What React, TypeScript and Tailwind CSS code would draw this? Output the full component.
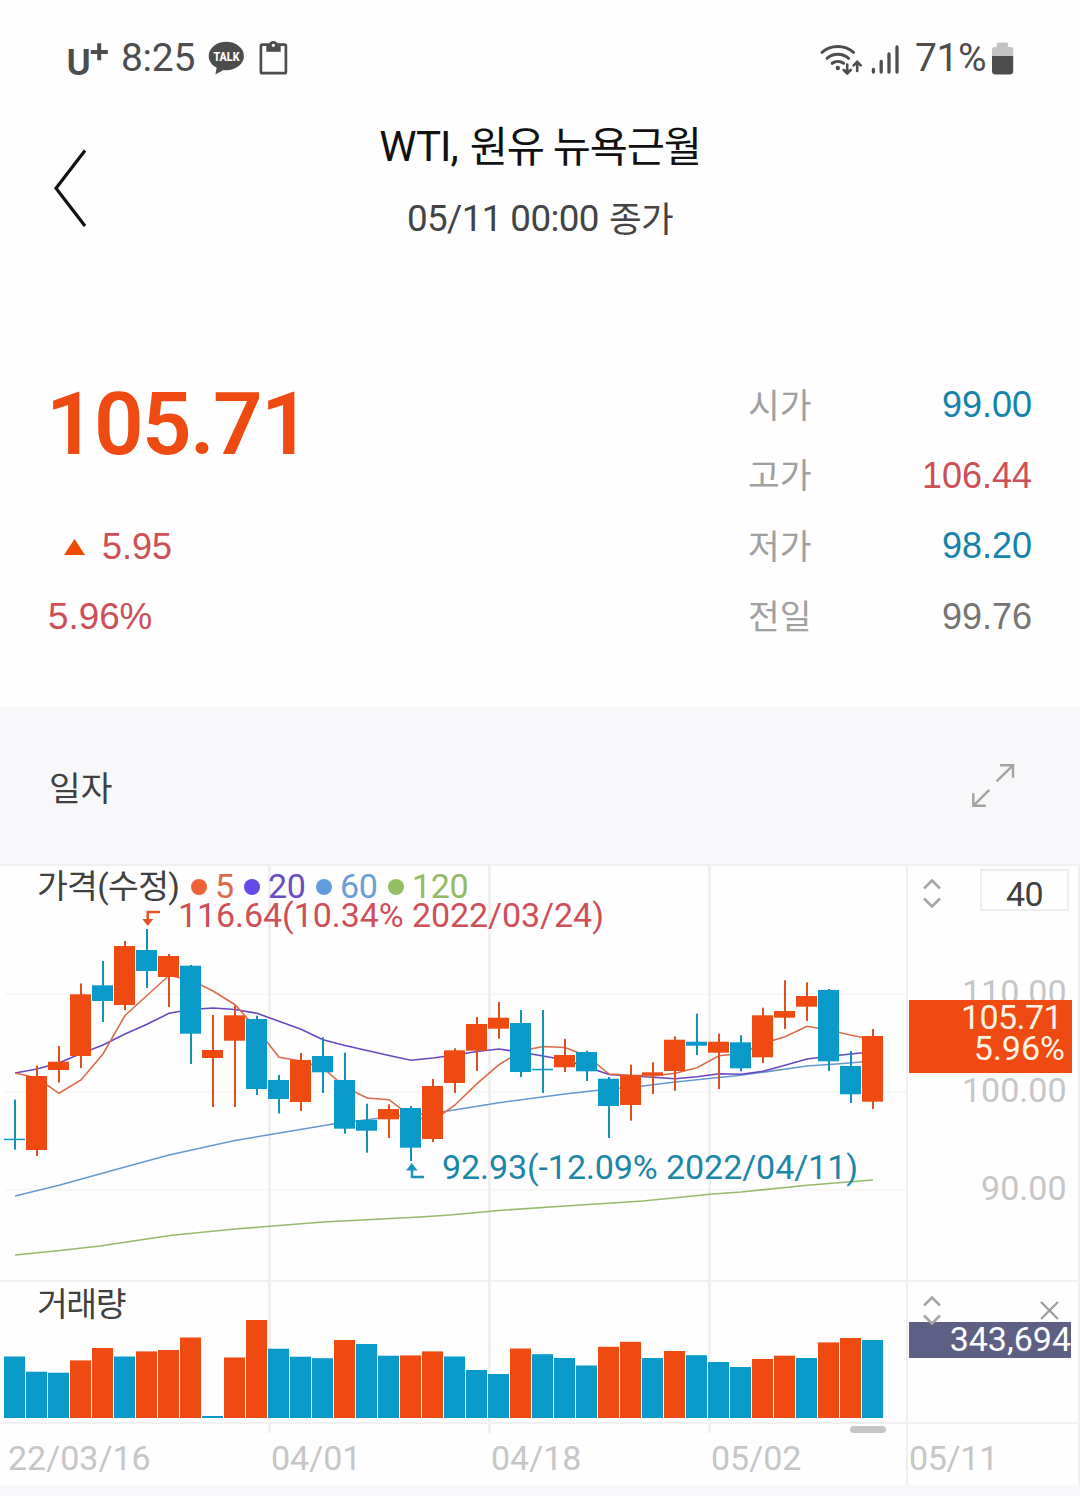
type Candle = [up: number, high: number, top: number, bottom: number, low: number];

const UP = "#f04a13";
const DOWN = "#0a9aca";
const GRID = "#f0f0f1";

// [up, high, body top, body bottom, low]
const candles: Candle[] = [
  [0, 1099.5, 1138.7, 1140.2, 1149.7],
  [1, 1065.7, 1076, 1150, 1156],
  [1, 1046, 1061.7, 1070, 1082.5],
  [1, 983.5, 994.3, 1056, 1068],
  [0, 961, 985.3, 1001, 1022],
  [1, 941, 946, 1005, 1010],
  [0, 929, 950, 971, 988],
  [1, 954, 956, 977, 1007],
  [0, 965, 965.7, 1033.7, 1064],
  [1, 1015, 1050, 1058, 1107],
  [1, 1005.7, 1015.3, 1040.7, 1107],
  [0, 1015.7, 1019, 1089, 1095],
  [0, 1075, 1080, 1099, 1113.5],
  [1, 1053, 1060, 1102, 1111],
  [0, 1037.3, 1056, 1072.3, 1093],
  [0, 1052.7, 1080, 1128.7, 1133.7],
  [0, 1103.7, 1120, 1130.7, 1152.7],
  [1, 1104.3, 1109, 1119.3, 1138],
  [0, 1106, 1108, 1147.7, 1161],
  [1, 1079, 1086, 1139, 1142],
  [1, 1048.3, 1050.3, 1083, 1093],
  [1, 1017, 1024, 1050.7, 1071],
  [1, 1002, 1017.7, 1028.7, 1038.7],
  [0, 1010, 1023, 1072, 1077],
  [0, 1010, 1068.8, 1070.3, 1093],
  [1, 1039, 1055, 1067.3, 1072],
  [0, 1050.7, 1052, 1071.3, 1081],
  [0, 1077, 1078.7, 1106, 1138],
  [1, 1064.7, 1075.3, 1105, 1120.7],
  [1, 1062.3, 1072.3, 1075.3, 1094],
  [1, 1036.3, 1039.7, 1071, 1090.7],
  [0, 1013.7, 1041.7, 1045.7, 1055],
  [1, 1033.7, 1041.7, 1052.7, 1089],
  [0, 1035.3, 1042.3, 1068.3, 1071.3],
  [1, 1007.7, 1015.3, 1057.3, 1063],
  [1, 980.3, 1011, 1017.7, 1029],
  [1, 982.3, 996, 1006.7, 1021],
  [0, 989, 990, 1061.3, 1071],
  [0, 1051, 1066, 1094.3, 1103],
  [1, 1029, 1036, 1101.7, 1109],
];

// [up, bar height]
const volumes: [number, number][] = [
  [0, 61.5], [0, 46.3], [0, 45.3], [1, 57.6], [1, 70], [0, 61.5], [1, 66.6], [1, 68],
  [1, 80.5], [0, 2], [1, 60.5], [1, 98], [0, 69.3], [0, 61.3], [0, 59.8], [1, 78],
  [0, 74], [0, 62.3], [1, 62.6], [1, 66.6], [0, 61.5], [0, 48], [0, 44], [1, 69.5],
  [0, 63.8], [0, 60], [0, 52.5], [1, 71.2], [1, 76.2], [0, 60], [1, 67], [0, 62.8],
  [0, 56], [0, 51], [1, 59], [1, 62.3], [0, 60], [1, 75.6], [1, 80], [0, 78],
];

const ma5 = [
  1073, 1078, 1093.3, 1080, 1054, 1015.5, 995.5, 975.5, 980, 991, 1004.7, 1029, 1057.3, 1061,
  1068, 1087, 1098, 1099.7, 1116.5, 1121, 1105, 1083.7, 1064.7, 1051, 1046.5, 1047.5, 1056, 1074,
  1075.3, 1076, 1073.3, 1067.7, 1055.7, 1053.5, 1043.5, 1036.7, 1026.3, 1030, 1035.3, 1039.5,
];

const ma20 = [
  1073, 1069, 1063, 1053.5, 1045, 1034, 1024.3, 1013.3, 1009.5, 1008, 1009.5, 1013.3, 1021.3,
  1029.3, 1039.7, 1045.5, 1050.5, 1055.5, 1060.3, 1058, 1055, 1051.5, 1049, 1052.3, 1056, 1060,
  1067, 1074.5, 1076, 1077.3, 1078.7, 1076.7, 1073.7, 1074.3, 1071.3, 1065.3, 1059, 1056.3, 1054,
  1051.7,
];

const ma60 =
  "15,1196 59,1185.3 125,1167 169,1155 235,1140.5 260,1136.3 333,1124 389,1117 443,1111.7 499,1102.7 565,1094 598,1090.3 641,1086.3 675,1082 741,1075.3 807,1066 840,1063.7 873,1061";
const ma120 =
  "15,1255 60,1250.5 100,1246 170,1235.5 235,1229 323,1222 420,1217 450,1215 499,1210.5 565,1206 643,1201 710,1194.3 741,1192 807,1185.3 873,1180";

const linePoints = (values: number[]) => values.map((y, i) => `${15 + 22 * i},${y}`).join(" ");

const quotes = [
  { label: "시가", value: "99.00", color: "text-[#1583ab]" },
  { label: "고가", value: "106.44", color: "text-[#cd4f57]" },
  { label: "저가", value: "98.20", color: "text-[#1583ab]" },
  { label: "전일", value: "99.76", color: "text-[#757575]" },
];

const legend = [
  { label: "5", dot: "bg-[#ee6336]", text: "text-[#dc6a48]", box: "w-[53px]" },
  { label: "20", dot: "bg-[#6549e8]", text: "text-[#6a4cc4]", box: "w-[72px]" },
  { label: "60", dot: "bg-[#619cdf]", text: "text-[#689ed6]", box: "w-[72px]" },
  { label: "120", dot: "bg-[#95bf63]", text: "text-[#93ba62]", box: "w-[90px]" },
];

const StatusBar = () => (
  <div className="flex h-[116px] items-center justify-between pr-[66px] pl-[62px] text-[39px] leading-none text-[#4d4d4d]">
    <div className="flex items-center">
      <svg width="50" height="56" viewBox="62 30 50 56" fill="#4d4d4d">
        <text x="66.500" y="74.800" fontSize="37" fontWeight="600">U</text>
        <path d="M97.2 43.2h4v6.800h6.600v3.900h-6.600v6.300h-4v-6.300h-6.400V50h6.400z" />
      </svg>
      <span className="ml-[9px] w-[87px] tracking-[-0.3px]">8:25</span>
      <svg width="38" height="36" viewBox="208 40 38 36">
        <ellipse cx="226.3" cy="56" rx="17.6" ry="14.2" fill="#4d4d4d" />
        <path d="M217 66l-1.6 8.600 9.600-5.400z" fill="#4d4d4d" />
        <text x="226.5" y="61.300" fill="#fff" fontSize="13.200" fontWeight="800" textAnchor="middle" textLength="26" lengthAdjust="spacingAndGlyphs">TALK</text>
      </svg>
      <svg className="ml-3" width="32" height="38" viewBox="258 38 32 38" fill="none">
        <rect x="260.900" y="43.700" width="25" height="28.500" rx="1.500" stroke="#4d4d4d" strokeWidth="2.700" />
        <path d="M266.300 43.500h14.400v7.300h-14.400z" fill="#4d4d4d" />
        <circle cx="273.400" cy="44.500" r="4.500" fill="#4d4d4d" />
        <circle cx="273.400" cy="44.300" r="1.600" fill="#fff" />
      </svg>
    </div>
    <div className="flex items-center">
      <svg width="94" height="38" viewBox="818 38 94 38" fill="none" stroke="#4d4d4d" strokeLinecap="round">
        <g strokeWidth="3">
          <path d="M822 51.300a24.500 24.500 0 0 1 31.600 0" />
          <path d="M827 57.300a16.500 16.500 0 0 1 21.600 0" />
          <path d="M832.2 62.300a9.500 9.500 0 0 1 11.400 0" />
        </g>
        <circle cx="837.8" cy="67" r="2.200" fill="#4d4d4d" stroke="none" />
        <path d="M847.2 63.500v8.500M843.700 69l3.500 3.500 3.500-3.500M857.200 70v-8.500M853.700 64.300l3.500-3.500 3.500 3.500" strokeWidth="2.600" />
        <path d="M873.400 68.500v2.500M881.200 60.500v10.500M889 53v18M897 46v25" strokeWidth="3.300" />
      </svg>
      <span className="ml-[3px] w-[77px] tracking-[-0.4px]">71%</span>
      <svg width="22" height="34" viewBox="992 41 22 34">
        <path d="M998 42.500h8.500q1.500 0 1.500 1.500v3h2q3.200 0 3.200 3.200V56H992v-5.800q0-3.200 3.200-3.200h1.500v-3q0-1.500 1.300-1.500z" fill="#c3c3c3" />
        <path d="M992 56h21.200v15q0 3.500-3.500 3.500h-14.200q-3.500 0-3.500-3.500z" fill="#4d4d4d" />
      </svg>
    </div>
  </div>
);

const TitleBar = () => (
  <header className="grid h-[253px] grid-cols-[130px_1fr_130px]">
    <svg className="mt-[30px] ml-[50px]" width="40" height="84" viewBox="50 146 40 84" fill="none">
      <path d="M85 150.500L56 188.300 85 226" stroke="#111" strokeWidth="3.200" />
    </svg>
    <div className="flex flex-col items-center gap-3 pt-px whitespace-nowrap">
      <h1 className="flex h-[60px] gap-3 text-[42px] leading-[60px] tracking-[-1px] text-[#111]">
        <span>WTI,</span>
        <span className="pt-px text-[41.500px] tracking-[-1.200px]">원유 뉴욕근월</span>
      </h1>
      <p className="flex h-[60px] gap-[10px] text-[36.800px] leading-[60px] tracking-[-0.600px] text-[#444]">
        <span>05/11 00:00</span>
        <span className="pt-px text-[35.500px]">종가</span>
      </p>
    </div>
  </header>
);

const Quote = () => (
  <section className="flex h-[338px] justify-between px-12">
    <div className="font-['Liberation_Sans',sans-serif] text-[36px] text-[#cd4f57]">
      <p className="-ml-[2px] font-[Roboto,sans-serif] text-[87px] leading-[110px] font-semibold tracking-[-1.700px] text-[#f04a13]">
        105.71
      </p>
      <div className="mt-8 flex h-[71px] items-center pl-4">
        <svg width="21" height="16" viewBox="0 0 21 16">
          <path d="M10.500 0L21 16H0z" fill="#f04a00" />
        </svg>
        <span className="ml-[17px]">5.95</span>
      </div>
      <p className="text-[36.800px] leading-[69px]">5.96%</p>
    </div>
    <dl className="w-[284px] pt-px text-[36px]">
      {quotes.map((quote) => (
        <div key={quote.label} className="flex h-[70.500px] items-center justify-between">
          <dt className="pt-[3px] text-[34.500px] text-[#a0a0a0]">{quote.label}</dt>
          <dd className={`font-['Liberation_Sans',sans-serif] ${quote.color}`}>{quote.value}</dd>
        </div>
      ))}
    </dl>
  </section>
);

const Chevrons = () => (
  <svg width="18" height="29" viewBox="0 0 18 29" fill="none" stroke="#a6a6a6" strokeWidth="2.600">
    <path d="M1 9.500L9 1.500l8 8M1 19.500l8 8 8-8" />
  </svg>
);

const PriceChart = () => (
  <svg className="block" width="906" height="414" viewBox="0 866 906 414">
    <g fill="#f7f7f8">
      <rect x="5" y="993" width="901" height="2.300" />
      <rect x="5" y="1090.500" width="901" height="2.300" />
      <rect x="5" y="1188.500" width="901" height="2.300" />
    </g>
    <g fill={GRID}>
      <rect x="268" y="866" width="3" height="414" />
      <rect x="488" y="866" width="3" height="414" />
      <rect x="708" y="866" width="3" height="414" />
    </g>
    <g fill="none" strokeWidth="1.600">
      <polyline points={ma120} stroke="#97b96c" />
      <polyline points={ma60} stroke="#6499d0" />
      <polyline points={linePoints(ma20)} stroke="#6847c0" />
      <polyline points={linePoints(ma5)} stroke="#dd6b49" />
    </g>
    {candles.map(([up, high, top, bottom, low], i) => (
      <g key={i}>
        <rect x={14 + 22 * i} y={high} width="2" height={low - high} fill={up ? "#dc4f20" : "#1590bb"} />
        <rect x={4 + 22 * i} y={top} width="21" height={bottom - top} fill={up ? UP : DOWN} />
      </g>
    ))}
    <path d="M160 912h-12.300v9" fill="none" stroke="#e55322" strokeWidth="2.500" />
    <path d="M142.300 919h11l-5.500 7z" fill="#e55322" />
    <path d="M424 1177h-12v-10" fill="none" stroke="#1b93bb" strokeWidth="2.500" />
    <path d="M406 1170.500h11.500l-5.700-7.500z" fill="#1b93bb" />
    <g fontSize="34">
      <text x="178" y="927" fill="#cd4f57" textLength="426">116.64(10.34% 2022/03/24)</text>
      <text x="442" y="1179" fill="#1b86a8" textLength="416">92.93(-12.09% 2022/04/11)</text>
    </g>
  </svg>
);

const PricePanel = () => (
  <div className="flex h-[416px] border-b-2 border-[#f0f0f1]">
    <div className="relative w-[906px]">
      <PriceChart />
      <div className="absolute top-0 left-[37px] flex h-10 items-center text-[34px] whitespace-nowrap">
        <span className="w-[154px] pt-[3px] text-[33.500px] tracking-[-0.700px] text-[#404040]">가격(수정)</span>
        {legend.map((item) => (
          <span key={item.label} className={`flex items-center gap-2 tracking-[-0.300px] ${item.box} ${item.text}`}>
            <i className={`mt-[2px] size-4 shrink-0 rounded-full ${item.dot}`} />
            {item.label}
          </span>
        ))}
      </div>
    </div>
    <div className="relative w-[174px] border-x-2 border-[#f0f0f1]">
      <div className="flex justify-between pt-[3px] pr-[9px] pl-[15px]">
        <div className="pt-[10px]">
          <Chevrons />
        </div>
        <div className="flex h-[42px] w-[89px] items-center justify-center border-[2.500px] border-[#eeeeef] pt-2 text-[34px] tracking-[-0.500px] text-[#404040]">
          40
        </div>
      </div>
      <svg className="absolute top-0 left-0" width="170" height="414" viewBox="908 866 170 414" fill="#c6c6c6" fontSize="34" textAnchor="end">
        <text x="1066.500" y="1004">110.00</text>
        <text x="1066.500" y="1101.700">100.00</text>
        <text x="1066.500" y="1199.700">90.00</text>
      </svg>
      <div className="absolute top-[134px] left-px h-[73px] w-[163px] bg-[#f04a13] pr-[7px] text-right text-[34px] leading-[31px] text-[#fff3e6]">
        <p className="pt-[2px] pr-[3px] tracking-[-0.600px]">105.71</p>
        <p>5.96%</p>
      </div>
    </div>
  </div>
);

const VolumePanel = () => (
  <div className="flex h-[142px] border-b-2 border-[#f0f0f1]">
    <div className="relative w-[906px]">
      <svg className="block" width="906" height="140" viewBox="0 1282 906 140">
        <g fill={GRID}>
          <rect x="268" y="1282" width="3" height="140" />
          <rect x="488" y="1282" width="3" height="140" />
          <rect x="708" y="1282" width="3" height="140" />
        </g>
        {volumes.map(([up, height], i) => (
          <rect key={i} x={4 + 22 * i} y={1418 - height} width="21" height={height} fill={up ? UP : DOWN} />
        ))}
      </svg>
      <span className="absolute top-[2px] left-[37px] text-[33.500px] leading-[42px] tracking-[-1.500px] text-[#404040]">거래량</span>
    </div>
    <div className="relative w-[174px] border-x-2 border-[#f0f0f1]">
      <div className="absolute top-10 left-px h-9 w-[162px] bg-[#5d5f84] text-right text-[34px] leading-[35px] text-white">
        343,694
      </div>
      <div className="relative flex items-start justify-between pt-[14px] pr-[19px] pl-[15px]">
        <Chevrons />
        <svg className="mt-[5px]" width="19" height="19" viewBox="0 0 19 19" stroke="#9c9c9c" strokeWidth="2.200">
          <path d="M1 1l17 17M18 1L1 18" />
        </svg>
      </div>
    </div>
  </div>
);

const DateAxis = () => (
  <div className="relative grid h-[61px] grid-cols-[268px_220px_220px_198px_174px] grid-rows-[61px] text-[34px] leading-[68px] text-[#c6c6c6]">
    <span className="pl-2">22/03/16</span>
    {["04/01", "04/18", "05/02"].map((date) => (
      <span key={date} className="flex">
        <i className="h-[9px] w-[3px] bg-[#f0f0f1]" />
        {date}
      </span>
    ))}
    <span className="border-x-2 border-[#f0f0f1] pl-px tracking-[-0.300px]">05/11</span>
    <div className="absolute top-[2px] left-[850px] h-[7px] w-9 rounded-full bg-[#c6c6c6]" />
  </div>
);

const App = () => {
  return (
    <main className="flex h-[1496px] w-[1080px] flex-col overflow-hidden bg-[#fefefe] font-[Roboto,'Noto_Sans_CJK_KR',sans-serif]">
      <StatusBar />
      <TitleBar />
      <Quote />
      <div className="flex h-[159px] items-center justify-between border-b-2 border-[#f0f0f1] bg-[#f8f8fa] pr-16 pl-[49px]">
        <h2 className="pt-2 text-[34.500px] text-[#404040]">일자</h2>
        <svg className="mb-px" width="46" height="46" viewBox="970 762 46 46" fill="none" stroke="#a3a3a3" strokeWidth="2.400">
          <path d="M1000 765.300h13v12.500M1013 765.300l-16.500 16M973.300 793.300v12.500h12.500M973.300 805.800l16-16" />
        </svg>
      </div>
      <PricePanel />
      <VolumePanel />
      <DateAxis />
      <div className="h-[11px] bg-[#f8f8fa]" />
    </main>
  );
};

export default App;
